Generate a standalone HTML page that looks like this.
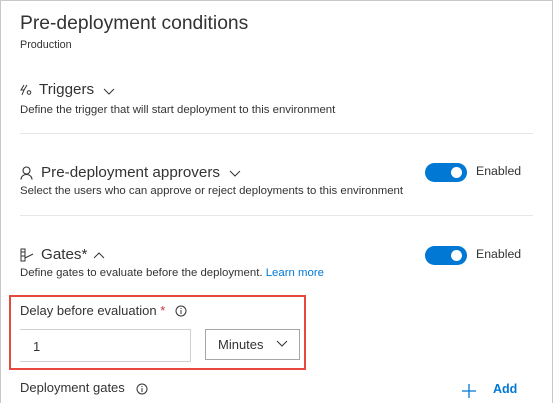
<!DOCTYPE html>
<html><head><style>
*{margin:0;padding:0;box-sizing:border-box}
body{width:553px;height:403px;overflow:hidden;background:#fff;font-family:"Segoe UI","Liberation Sans",sans-serif;color:#333;position:relative}
.frame{position:absolute;left:0;top:0;width:553px;height:403px;border:1px solid #c8c8c8;border-bottom:none}
.a{position:absolute;white-space:nowrap}
.h{font-size:15.2px;color:#333}
.d{font-size:11.4px;color:#333}
.sep{position:absolute;left:20px;width:513px;height:1px;background:#e6e6e6}
.tog{position:absolute;width:42px;height:19px;border-radius:10px;background:#0078d4}
.tog:after{content:"";position:absolute;right:5px;top:4px;width:11px;height:11px;border-radius:50%;background:#fff}
.en{font-size:12.3px;color:#333}
</style></head><body>
<div class="frame"></div>
<div class="a" style="left:20px;top:13px;font-size:19.3px;color:#333">Pre-deployment conditions</div>
<div class="a" style="left:20px;top:39px;font-size:10.8px">Production</div>

<svg class="a" style="left:20px;top:84px" width="12" height="12" viewBox="0 0 12 12" fill="none" stroke="#333" stroke-width="1"><path d="M4 1L1 6h3L2 11M7 1L4 6"/><circle cx="9" cy="8.5" r="1.8"/></svg>
<div class="a h" style="left:39px;top:81px">Triggers</div>
<svg class="a" style="left:103px;top:88px" width="12" height="8"><path d="M1 1l5 5 5-5" fill="none" stroke="#333"/></svg>
<div class="a d" style="left:20px;top:104px">Define the trigger that will start deployment to this environment</div>
<div class="sep" style="top:133px"></div>

<svg class="a" style="left:20px;top:166px" width="13" height="14" viewBox="0 0 13 14" fill="none" stroke="#333" stroke-width="1.1"><circle cx="6.5" cy="4.5" r="3.5"/><path d="M1 13.5c0-3 2.5-5 5.5-5s5.5 2 5.5 5"/></svg>
<div class="a h" style="left:41px;top:164px">Pre-deployment approvers</div>
<svg class="a" style="left:229px;top:170px" width="12" height="8"><path d="M1 1l5 5 5-5" fill="none" stroke="#333"/></svg>
<div class="a d" style="left:20px;top:185px">Select the users who can approve or reject deployments to this environment</div>
<div class="tog" style="left:425px;top:163px"></div>
<div class="a en" style="left:476px;top:164px">Enabled</div>
<div class="sep" style="top:215px"></div>

<svg class="a" style="left:20px;top:248px" width="15" height="14" viewBox="0 0 15 14" fill="none" stroke="#333" stroke-width="1"><rect x="1" y="1" width="4" height="12"/><path d="M1 4h4M1 8h4M5 10l8-4"/></svg>
<div class="a h" style="left:41px;top:246px">Gates*</div>
<svg class="a" style="left:93px;top:251px" width="12" height="8"><path d="M1 7l5-5 5 5" fill="none" stroke="#333"/></svg>
<div class="a d" style="left:20px;top:267px">Define gates to evaluate before the deployment. <span style="color:#0078d4">Learn more</span></div>
<div class="tog" style="left:425px;top:246px"></div>
<div class="a en" style="left:476px;top:247px">Enabled</div>

<div class="a" style="left:9px;top:295px;width:297px;height:75px;border:2px solid #e8493e"></div>
<div class="a" style="left:20px;top:303px;font-size:13px">Delay before evaluation <span style="color:#c4314b">*</span></div>
<svg class="a" style="left:175px;top:305px" width="12" height="12"><circle cx="6" cy="6" r="5" fill="none" stroke="#333"/><path d="M6 5v4M6 3v1" stroke="#333"/></svg>
<div class="a" style="left:20px;top:329px;width:171px;height:33px;border:1px solid #d0d0d0;border-left:none;font-size:13px;padding:9px 0 0 13px">1</div>
<div class="a" style="left:205px;top:329px;width:95px;height:31px;border:1px solid #a6a6a6;font-size:13px;padding:7px 0 0 12px">Minutes</div>
<svg class="a" style="left:276px;top:340px" width="12" height="8"><path d="M1 1l5 5 5-5" fill="none" stroke="#333"/></svg>
<div class="a" style="left:20px;top:380px;font-size:13px">Deployment gates</div>
<svg class="a" style="left:136px;top:383px" width="12" height="12"><circle cx="6" cy="6" r="5" fill="none" stroke="#333"/><path d="M6 5v4M6 3v1" stroke="#333"/></svg>
<svg class="a" style="left:461px;top:383px" width="16" height="16"><path d="M8 1v14M1 8h14" stroke="#0078d4" stroke-width="1.3"/></svg>
<div class="a" style="left:493px;top:382px;font-size:12.5px;font-weight:bold;color:#0078d4">Add</div>
</body></html>
